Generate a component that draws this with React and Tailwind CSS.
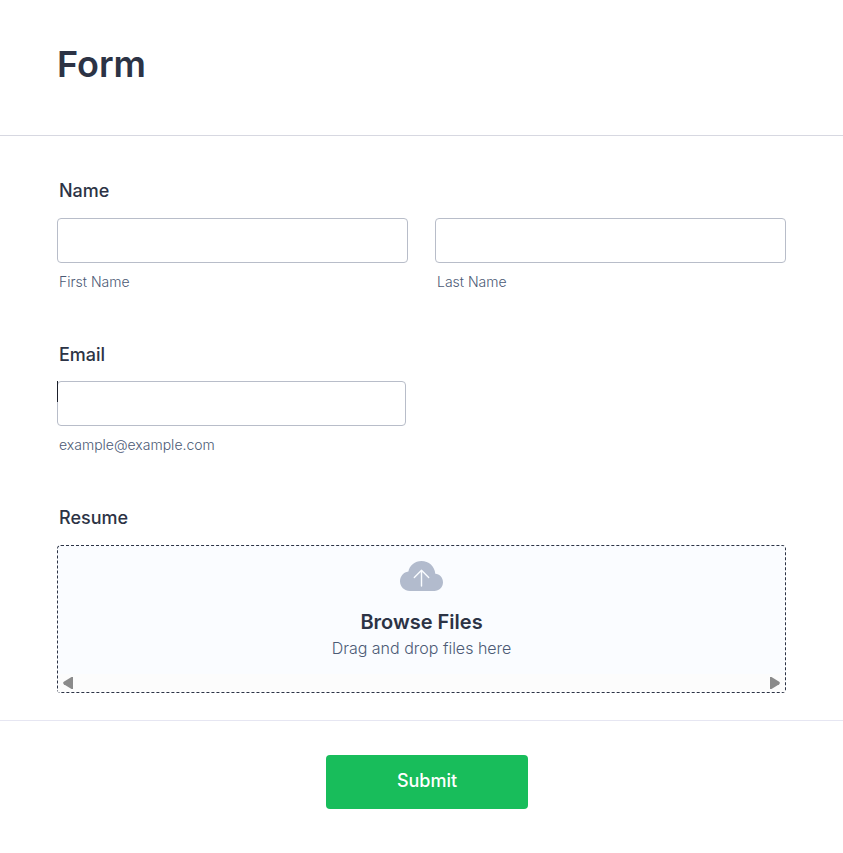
import React, { useState } from "react";

const inputClass =
  "block h-[45px] w-full rounded-[4px] border border-[#b8bdc9] bg-white px-3 text-base text-[#2c3345] focus:outline-none focus:border-[#2e69ff]";

const App = () => {
  const [form, setForm] = useState({ firstName: "", lastName: "", email: "" });

  const handleChange = (e) => {
    setForm({ ...form, [e.target.name]: e.target.value });
  };

  return (
    <form
      onSubmit={(e) => e.preventDefault()}
      className="min-h-screen bg-white font-['Inter',sans-serif] text-[#2c3345]"
    >
      {/* HEADER */}
      <header className="border-b border-[#d7d8e1] px-6 pt-10 pb-[47px] sm:px-[57px]">
        <h1 className="text-4xl leading-[48px] font-semibold">Form</h1>
      </header>

      <div className="flex flex-col gap-[51px] px-6 pt-[43px] pb-[27px] sm:px-[57px]">
        {/* NAME */}
        <fieldset>
          <legend className="mb-[15px] px-[2px] text-lg leading-6 font-medium">
            Name
          </legend>
          <div className="grid grid-cols-1 gap-[27px] sm:grid-cols-2">
            <Field
              id="firstName"
              hint="First Name"
              value={form.firstName}
              onChange={handleChange}
            />
            <Field
              id="lastName"
              hint="Last Name"
              value={form.lastName}
              onChange={handleChange}
            />
          </div>
        </fieldset>

        {/* EMAIL */}
        <div>
          <label
            htmlFor="email"
            className="mb-[14px] block px-[2px] text-lg leading-6 font-medium"
          >
            Email
          </label>
          <div className="relative max-w-[349px]">
            <Field
              id="email"
              type="email"
              hint="example@example.com"
              value={form.email}
              onChange={handleChange}
            />
            <span className="absolute top-0 left-0 h-[21px] w-px bg-[#1b1f2b]" />
          </div>
        </div>

        {/* RESUME */}
        <div>
          <label
            htmlFor="resume"
            className="mb-[15px] block px-[2px] text-lg leading-6 font-medium"
          >
            Resume
          </label>
          <FileDrop id="resume" />
        </div>
      </div>

      {/* SUBMIT */}
      <footer className="flex justify-center border-t border-[#e6e6f2] py-[34px] pl-[11px]">
        <button
          type="submit"
          className="h-[54px] w-[202px] cursor-pointer rounded-[4px] bg-[#18bd5b] pb-[2px] text-lg font-medium text-white"
        >
          Submit
        </button>
      </footer>
    </form>
  );
};

const Field = ({ id, hint, type = "text", value, onChange }) => (
  <div>
    <input
      id={id}
      name={id}
      type={type}
      value={value}
      onChange={onChange}
      className={inputClass}
    />
    <label
      htmlFor={id}
      className="mt-[9px] block px-[2px] text-sm leading-5 font-light text-[#4c5a75]"
    >
      {hint}
    </label>
  </div>
);

const FileDrop = ({ id }) => (
  <div className="rounded-[4px] border border-dashed border-[#2c3345] bg-[#fafcff]">
    <button
      id={id}
      type="button"
      className="flex w-full cursor-pointer flex-col items-center pt-[15px] pb-[14px]"
    >
      <CloudIcon />
      <span className="mt-[17px] text-xl leading-7 font-semibold">
        Browse Files
      </span>
      <span className="text-base leading-6 font-light text-[#4c5a75]">
        Drag and drop files here
      </span>
    </button>
    <div className="flex h-[18px] items-start justify-between bg-[#fcfcfc] px-[5px] pt-[3px]">
      <svg width="10" height="12" viewBox="0 0 10 12" fill="#8b8b8b">
        <path d="M10 0V12H8.5L0.8 7.2Q-0.5 6 0.8 4.8L8.5 0Z" />
      </svg>
      <svg width="10" height="12" viewBox="0 0 10 12" fill="#8b8b8b">
        <path d="M0 0V12H1.5L9.2 7.2Q10.5 6 9.2 4.8L1.5 0Z" />
      </svg>
    </div>
  </div>
);

const CloudIcon = () => (
  <svg width="43" height="30" viewBox="0 0 43 30" fill="none">
    <path
      d="M10 30C4.4 30 0 25.6 0 20.2C0 15.2 3.6 11.1 8.4 10.4C9.6 4.4 15 0 21.4 0C28.8 0 34.8 5.4 35.3 12.7C39.6 12.9 43 16.5 43 21.2C43 26.1 39.1 30 34.3 30Z"
      fill="#b2bbcd"
    />
    <path
      d="M21.5 25V9.2M14.3 16.4L21.5 9.2L28.7 16.4"
      stroke="#fafcff"
      strokeWidth="1.4"
      strokeLinecap="round"
      strokeLinejoin="round"
    />
  </svg>
);

export default App;
